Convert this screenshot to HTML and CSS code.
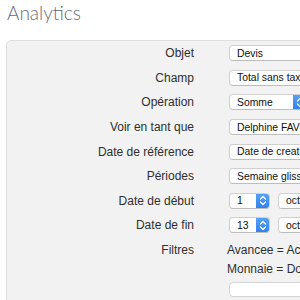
FILE: index.html
```html
<!DOCTYPE html>
<html lang="fr">
<head>
  <meta charset="UTF-8">
  <meta name="viewport" content="width=device-width, initial-scale=1.0">
  <title>Analytics</title>
  <link rel="stylesheet" href="styles.css">
</head>
<body>
  <header class="top">
    <h1>Analytics</h1>
  </header>

  <div class="panel">
    <div class="row">
      <label>Objet</label>
      <div class="field"><span class="select wide"><span class="val">Devis</span></span></div>
    </div>
    <div class="row">
      <label>Champ</label>
      <div class="field"><span class="select wide"><span class="val">Total sans taxes</span></span></div>
    </div>
    <div class="row">
      <label>Opération</label>
      <div class="field">
        <span class="select op"><span class="val">Somme</span><span class="step"><svg width="8" height="11" viewBox="0 0 8 11"><path d="M1.5 4 L4 1.5 L6.5 4 M1.5 7 L4 9.5 L6.5 7" fill="none" stroke="#fff" stroke-width="1.2" stroke-linecap="round" stroke-linejoin="round"/></svg></span></span>
      </div>
    </div>
    <div class="row">
      <label>Voir en tant que</label>
      <div class="field"><span class="select wide"><span class="val">Delphine FAVRE</span></span></div>
    </div>
    <div class="row">
      <label>Date de référence</label>
      <div class="field"><span class="select wide"><span class="val">Date de creation</span></span></div>
    </div>
    <div class="row">
      <label>Périodes</label>
      <div class="field"><span class="select wide"><span class="val">Semaine glissante</span></span></div>
    </div>
    <div class="row">
      <label>Date de début</label>
      <div class="field">
        <span class="select day"><span class="val">1</span><span class="step"><svg width="8" height="11" viewBox="0 0 8 11"><path d="M1.5 4 L4 1.5 L6.5 4 M1.5 7 L4 9.5 L6.5 7" fill="none" stroke="#fff" stroke-width="1.2" stroke-linecap="round" stroke-linejoin="round"/></svg></span></span>
        <span class="select month"><span class="val">octobre</span></span>
      </div>
    </div>
    <div class="row">
      <label>Date de fin</label>
      <div class="field">
        <span class="select day"><span class="val">13</span><span class="step"><svg width="8" height="11" viewBox="0 0 8 11"><path d="M1.5 4 L4 1.5 L6.5 4 M1.5 7 L4 9.5 L6.5 7" fill="none" stroke="#fff" stroke-width="1.2" stroke-linecap="round" stroke-linejoin="round"/></svg></span></span>
        <span class="select month"><span class="val">octobre</span></span>
      </div>
    </div>
    <div class="row filters">
      <label>Filtres</label>
      <div class="filter-list">
        <p>Avancee = Accepté</p>
        <p>Monnaie = Dollar</p>
        <span class="input"></span>
      </div>
    </div>
  </div>
</body>
</html>
```

FILE: styles.css
```css
* { margin: 0; padding: 0; box-sizing: border-box; }
html, body { overflow: hidden; background: #fff; }
body { font-family: "Liberation Sans", Arial, sans-serif; color: #2f2f2f; width: 300px; height: 300px; }

.top { height: 40px; padding: 2px 0 0 7px; }
.top h1 {
  font-family: Lato, "Liberation Sans", sans-serif;
  font-weight: 300;
  font-size: 19px;
  line-height: 22px;
  color: #676b7b;
}

.panel {
  margin-left: 6px;
  width: 330px;
  height: 300px;
  background: #f2f2f2;
  border: 1px solid #dedede;
  border-radius: 5px;
}

.row {
  display: grid;
  grid-template-columns: 187px 1fr;
  column-gap: 35px;
  height: 24.6px;
  align-items: center;
  font-size: 12px;
}
.row label { text-align: right; white-space: nowrap; }
.field { display: flex; gap: 8px; white-space: nowrap; }

.select {
  display: flex;
  align-items: center;
  height: 16px;
  background: #fff;
  border: 1px solid #cfcfcf;
  border-bottom-color: #bdbdbd;
  border-radius: 4px;
  font-size: 10.4px;
  color: #111;
  overflow: hidden;
}
.select .val { flex: 1; padding-left: 7px; white-space: nowrap; }
.wide { width: 140px; }
.op { width: 78px; }
.day { width: 41px; }
.month { width: 90px; }

.step {
  display: flex;
  align-items: center;
  justify-content: center;
  width: 14px;
  height: 16px;
  margin: -1px -1px -1px 0;
  background: linear-gradient(#5aa3f7, #2f7fef);
  border-radius: 0 4px 4px 0;
}

.filters { height: auto; align-items: start; }
.filters label { padding-top: 3px; line-height: 19px; }
.filter-list { padding-top: 3px; margin-left: -2px; }
.filter-list p { line-height: 19px; white-space: nowrap; }
.input {
  display: block;
  margin: 3px 0 0 2px;
  width: 140px;
  height: 15px;
  background: #fff;
  border: 1px solid #d3d3d3;
  border-radius: 4px;
}
```
